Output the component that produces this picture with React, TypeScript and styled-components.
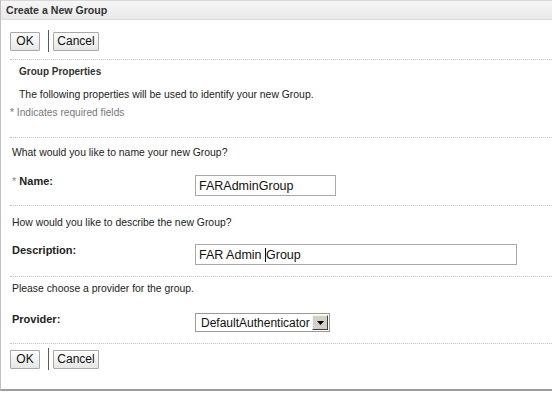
import styled, { createGlobalStyle } from "styled-components";

const GlobalStyle = createGlobalStyle`
  html, body {
    margin: 0;
    padding: 0;
    background: #fff;
  }
  body {
    font-family: "Liberation Sans", Arial, sans-serif;
    font-size: 10.4px;
    color: #222;
  }
`;

const App = () => {
  return (
    <>
      <GlobalStyle />
      <Frame>
        <Header>Create a New Group</Header>

        <ButtonBar $top={10}>
          <Button $width={30}>OK</Button>
          <BarSeparator />
          <Button $width={46}>Cancel</Button>
        </ButtonBar>

        <Divider $top={7} />

        <TextRow $height={22} $indent={18}>
          <SectionTitle>Group Properties</SectionTitle>
        </TextRow>
        <TextRow $height={24} $indent={18}>
          The following properties will be used to identify your new Group.
        </TextRow>
        <TextRow $height={12} $indent={9}>
          <Hint>* Indicates required fields</Hint>
        </TextRow>

        <Divider $top={19} />

        <TextRow $height={28} $indent={11}>
          What would you like to name your new Group?
        </TextRow>
        <FieldRow $top={9} $bottom={9}>
          <Label>
            <Star>* </Star>Name:
          </Label>
          <TextBox $width={141}>FARAdminGroup</TextBox>
        </FieldRow>

        <Divider />

        <TextRow $height={32} $indent={11}>
          How would you like to describe the new Group?
        </TextRow>
        <FieldRow $top={6} $bottom={11}>
          <Label>Description:</Label>
          <TextBox $width={322}>
            FAR Admin <Caret />Group
          </TextBox>
        </FieldRow>

        <Divider />

        <TextRow $height={22} $indent={11}>
          Please choose a provider for the group.
        </TextRow>
        <FieldRow $top={14} $bottom={11}>
          <Label>Provider:</Label>
          <Select>
            <SelectValue>DefaultAuthenticator</SelectValue>
            <SelectArrow>
              <svg width="7" height="4" viewBox="0 0 7 4">
                <path d="M0 0h7L3.5 4z" fill="#000" />
              </svg>
            </SelectArrow>
          </Select>
        </FieldRow>

        <Divider />

        <ButtonBar $top={4}>
          <Button $width={30}>OK</Button>
          <BarSeparator />
          <Button $width={46}>Cancel</Button>
        </ButtonBar>
      </Frame>
    </>
  );
};

const Frame = styled.div`
  width: 552px;
  height: 391px;
  box-sizing: border-box;
  border-left: 1px solid #c0c0c0;
  border-bottom: 2px solid #9c9c9c;
  background: #fff;
  overflow: hidden;
`;

const Header = styled.div`
  height: 20px;
  box-sizing: border-box;
  padding-left: 5px;
  border-top: 1px solid #d8d8d8;
  border-bottom: 1px solid #dcdcdc;
  background: linear-gradient(#f6f6f6, #e9e9e9);
  display: flex;
  align-items: center;
  font-weight: bold;
  font-size: 10.6px;
  color: #333;
`;

const ButtonBar = styled.div<{ $top: number }>`
  display: flex;
  align-items: center;
  height: 22px;
  margin-top: ${(p) => p.$top}px;
  padding-left: 9px;
`;

const Button = styled.div<{ $width: number }>`
  width: ${(p) => p.$width}px;
  height: 19px;
  box-sizing: border-box;
  border: 1px solid #a8a8a8;
  border-radius: 1px;
  background: linear-gradient(#ffffff, #e6e6e6);
  display: flex;
  align-items: center;
  justify-content: center;
  font-size: 12px;
  color: #111;
`;

const BarSeparator = styled.div`
  width: 1px;
  height: 22px;
  margin: 0 4px 0 8px;
  background: #5a5a5a;
`;

const Divider = styled.div<{ $top?: number }>`
  margin-top: ${(p) => p.$top ?? 0}px;
  margin-left: 9px;
  height: 0;
  border-top: 1px dotted #c4c4c4;
`;

const TextRow = styled.div<{ $height: number; $indent: number }>`
  height: ${(p) => p.$height}px;
  padding-left: ${(p) => p.$indent}px;
  display: flex;
  align-items: center;
  white-space: nowrap;
  color: #222;
`;

const SectionTitle = styled.span`
  font-weight: bold;
  font-size: 10px;
  color: #333;
`;

const Hint = styled.span`
  font-size: 10.2px;
  color: #777;
`;

const FieldRow = styled.div<{ $top: number; $bottom: number }>`
  display: flex;
  align-items: flex-start;
  padding: ${(p) => p.$top}px 0 ${(p) => p.$bottom}px 11px;
`;

const Label = styled.div`
  width: 183px;
  line-height: 12px;
  font-size: 11px;
  font-weight: bold;
  color: #222;
`;

const Star = styled.span`
  font-weight: normal;
  color: #888;
`;

const TextBox = styled.div<{ $width: number }>`
  width: ${(p) => p.$width}px;
  height: 21px;
  box-sizing: border-box;
  border: 1px solid #a9a9a9;
  padding-left: 3px;
  display: flex;
  align-items: center;
  font-size: 12.5px;
  color: #111;
  white-space: pre;
`;

const Caret = styled.span`
  display: inline-block;
  width: 1px;
  height: 14px;
  background: #000;
`;

const Select = styled.div`
  width: 135px;
  height: 19px;
  box-sizing: border-box;
  border: 1px solid #9a9a9a;
  display: flex;
  align-items: center;
`;

const SelectValue = styled.div`
  flex: 1;
  padding-left: 5px;
  font-size: 12px;
  color: #111;
  white-space: nowrap;
`;

const SelectArrow = styled.div`
  width: 16px;
  height: 15px;
  margin-right: 1px;
  box-sizing: border-box;
  background: #d4d0c8;
  border-top: 1px solid #f4f4f4;
  border-left: 1px solid #f4f4f4;
  border-right: 1px solid #404040;
  border-bottom: 1px solid #404040;
  display: flex;
  align-items: center;
  justify-content: center;
`;

export default App;
